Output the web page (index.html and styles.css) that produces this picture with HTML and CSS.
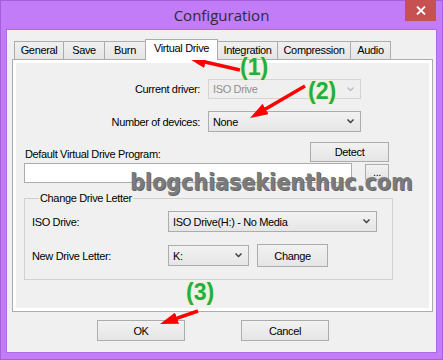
FILE: index.html
```html
<!DOCTYPE html>
<html lang="en">
  <head>
    <meta charset="UTF-8" />
    <meta name="viewport" content="width=device-width, initial-scale=1.0" />
    <title>Configuration</title>
    <link rel="stylesheet" href="styles.css">
  </head>
  <body>
    <div class="window">
      <div class="titlebar">
        <span class="title">Configuration</span>
        <span class="close">
          <svg width="10" height="9" viewBox="0 0 10 9"><path d="M1 0.5 L9 8.5 M9 0.5 L1 8.5" stroke="#fff" stroke-width="1.8" /></svg>
        </span>
      </div>

      <div class="client">
        <div class="tabs">
          <div class="tab tab-general">General</div>
          <div class="tab tab-save">Save</div>
          <div class="tab tab-burn">Burn</div>
          <div class="tab tab-vd active">Virtual Drive</div>
          <div class="tab tab-int">Integration</div>
          <div class="tab tab-comp">Compression</div>
          <div class="tab tab-audio">Audio</div>
        </div>

        <div class="panel">
          <div class="page">
            <div class="driver-grid">
              <label>Current driver:</label>
              <div class="combo disabled combo-driver">
                <span>ISO Drive</span>
                <svg class="chev" width="7" height="5" viewBox="0 0 7 5"><path d="M0 1 L1 0 L3.5 2.5 L6 0 L7 1 L3.5 4.5 Z" /></svg>
              </div>
              <label>Number of devices:</label>
              <div class="combo combo-count">
                <span>None</span>
                <svg class="chev" width="7" height="5" viewBox="0 0 7 5"><path d="M0 1 L1 0 L3.5 2.5 L6 0 L7 1 L3.5 4.5 Z" /></svg>
              </div>
            </div>

            <div class="program-row">
              <label>Default Virtual Drive Program:</label>
              <button class="btn btn-detect">Detect</button>
            </div>
            <div class="path-row">
              <div class="textbox"></div>
              <button class="btn btn-browse">...</button>
            </div>

            <fieldset class="group">
              <legend>Change Drive Letter</legend>
              <div class="group-grid">
                <label>ISO Drive:</label>
                <div class="combo combo-iso">
                  <span>ISO Drive(H:) - No Media</span>
                  <svg class="chev" width="7" height="5" viewBox="0 0 7 5"><path d="M0 1 L1 0 L3.5 2.5 L6 0 L7 1 L3.5 4.5 Z" /></svg>
                </div>
                <label>New Drive Letter:</label>
                <div class="letter-row">
                  <div class="combo combo-letter">
                    <span>K:</span>
                    <svg class="chev" width="7" height="5" viewBox="0 0 7 5"><path d="M0 1 L1 0 L3.5 2.5 L6 0 L7 1 L3.5 4.5 Z" /></svg>
                  </div>
                  <button class="btn btn-change">Change</button>
                </div>
              </div>
            </fieldset>
          </div>
        </div>

        <div class="actions">
          <button class="btn btn-ok">OK</button>
          <button class="btn btn-cancel">Cancel</button>
        </div>
      </div>

      <!-- tutorial marks drawn over the dialog -->
      <div class="watermark">blogchiasekienthuc.com</div>
      <svg class="marks" width="443" height="360" viewBox="0 0 443 360">
        <defs>
          <marker id="head" markerUnits="userSpaceOnUse" markerWidth="18" markerHeight="12" refX="6" refY="6" orient="auto">
            <path d="M0 0 L18 6 L0 12 Z" fill="#f00" />
          </marker>
        </defs>
        <line x1="240" y1="70" x2="199.7" y2="60.7" stroke="#f00" stroke-width="3.5" marker-end="url(#head)" />
        <line x1="305" y1="86" x2="260.4" y2="112" stroke="#f00" stroke-width="3.5" marker-end="url(#head)" />
        <line x1="198" y1="311" x2="171.4" y2="320.1" stroke="#f00" stroke-width="3.5" marker-end="url(#head)" />
      </svg>
      <span class="step step-1">(1)</span>
      <span class="step step-2">(2)</span>
      <span class="step step-3">(3)</span>
    </div>
  </body>
</html>
```

FILE: styles.css
```css
* {
  box-sizing: border-box;
}
body {
  margin: 0;
  font-family: "Liberation Sans", Arial, sans-serif;
  font-size: 11px;
  letter-spacing: -0.35px;
  color: #000;
}
.window {
  position: relative;
  width: 443px;
  height: 360px;
  background-color: #c27cf7;
  box-shadow: inset 0 0 0 1px #a75ddc;
  overflow: hidden;
}
.titlebar {
  display: grid;
  grid-template-columns: 1fr auto 1fr;
  height: 30px;
}
.title {
  grid-column: 2;
  font-family: "Open Sans", "Noto Sans", sans-serif;
  font-size: 15px;
  letter-spacing: 0;
  line-height: 31px;
  color: #2b2b3a;
}
.close {
  grid-column: 3;
  justify-self: end;
  align-self: start;
  display: flex;
  align-items: center;
  justify-content: center;
  width: 31px;
  height: 21px;
  margin-right: 7px;
  background-color: #c75050;
}
.client {
  height: 322px;
  margin: 0 7px;
  padding-top: 9px;
  background-color: #f0f0f0;
  box-shadow: 0 0 0 1px #b06ae6;
}

/* tabs */
.tabs {
  display: flex;
  align-items: flex-end;
  height: 20px;
  padding-left: 7px;
}
.tab {
  height: 18px;
  margin-left: -1px;
  border: 1px solid #acacac;
  border-bottom: none;
  background: linear-gradient(#f0f0f0, #e5e5e5);
  text-align: center;
  line-height: 17px;
}
.tab-general { width: 50px; margin-left: 0; }
.tab-save { width: 42px; }
.tab-burn { width: 42px; }
.tab-vd { width: 73px; }
.tab-int { width: 61px; }
.tab-comp { width: 74px; }
.tab-audio { width: 41px; }
.tab.active {
  position: relative;
  z-index: 1;
  height: 21px;
  margin-bottom: -1px;
  background: #fff;
  line-height: 16px;
}
.panel {
  width: 421px;
  height: 253px;
  margin-left: 5px;
  padding: 3px;
  border: 1px solid #acacac;
  background-color: #fff;
}
.page {
  height: 100%;
  padding-top: 16px;
  background-color: #f0f0f0;
}

/* controls */
.combo {
  display: flex;
  align-items: center;
  justify-content: space-between;
  padding: 0 6px 0 4px;
  border: 1px solid #acacac;
  background: linear-gradient(#f2f2f2, #e6e6e6);
}
.combo .chev {
  fill: #3c3c3c;
}
.combo.disabled {
  border-color: #d4d4d4;
  background: #efefef;
  color: #8f8f8f;
}
.combo.disabled .chev {
  fill: #bdbdbd;
}
.btn {
  padding: 0;
  border: 1px solid #acacac;
  background: linear-gradient(#f2f2f2, #e5e5e5);
  font: inherit;
  letter-spacing: inherit;
  color: #000;
  text-align: center;
}
.driver-grid {
  display: grid;
  grid-template-columns: 184px 153px;
  grid-template-rows: 20px 21px;
  column-gap: 8px;
  row-gap: 12px;
  align-items: center;
}
.driver-grid label {
  text-align: right;
}
.combo-driver,
.combo-count {
  height: 100%;
}
.program-row {
  display: flex;
  align-items: flex-end;
  justify-content: space-between;
  margin-top: 10px;
  padding: 0 40px 0 9px;
}
.program-row label {
  padding-bottom: 2px;
}
.btn-detect {
  width: 79px;
  height: 20px;
}
.path-row {
  display: flex;
  align-items: flex-start;
  margin-top: 1px;
  padding-left: 8px;
}
.textbox {
  width: 328px;
  height: 20px;
  border: 1px solid #abadb3;
  background-color: #fff;
}
.btn-browse {
  width: 24px;
  height: 16px;
  margin: 1px 0 0 13px;
  line-height: 8px;
}

/* group box */
.group {
  width: 369px;
  height: 88px;
  margin: 9px 0 0 8px;
  padding: 6px 0 0 7px;
  border: 1px solid #d0d0d0;
}
.group legend {
  margin-left: 7px;
  padding: 0 1px;
  line-height: 13px;
}
.group-grid {
  display: grid;
  grid-template-columns: 136px auto;
  grid-template-rows: 21px 23px;
  row-gap: 12px;
  align-items: center;
}
.combo-iso {
  width: 209px;
  height: 21px;
}
.letter-row {
  display: flex;
  align-items: center;
}
.combo-letter {
  width: 81px;
  height: 21px;
}
.btn-change {
  width: 71px;
  height: 23px;
  margin-left: 8px;
}
.actions {
  display: flex;
  margin-top: 8px;
  padding-left: 90px;
}
.btn-ok,
.btn-cancel {
  width: 88px;
  height: 21px;
}
.btn-cancel {
  margin-left: 56px;
}

/* tutorial overlay */
.watermark {
  position: absolute;
  left: 130px;
  top: 173px;
  font-family: "DejaVu Sans Condensed", "DejaVu Sans", sans-serif;
  font-weight: bold;
  font-size: 23px;
  line-height: 18px;
  letter-spacing: 0;
  color: #7b7b7b;
  text-shadow: 1px 1px 0 #666;
}
.marks {
  position: absolute;
  left: 0;
  top: 0;
  pointer-events: none;
}
.step {
  position: absolute;
  font-family: "Liberation Sans", Arial, sans-serif;
  font-weight: bold;
  font-size: 23px;
  line-height: 23px;
  letter-spacing: 0;
  color: #1fae4f;
  text-shadow: 0 0 1px #f1f27a, 0 0 1px #f1f27a, 0 0 2px #f6f7b0;
}
.step-1 { left: 240px; top: 56px; }
.step-2 { left: 308px; top: 80px; }
.step-3 { left: 186px; top: 281px; }
```
